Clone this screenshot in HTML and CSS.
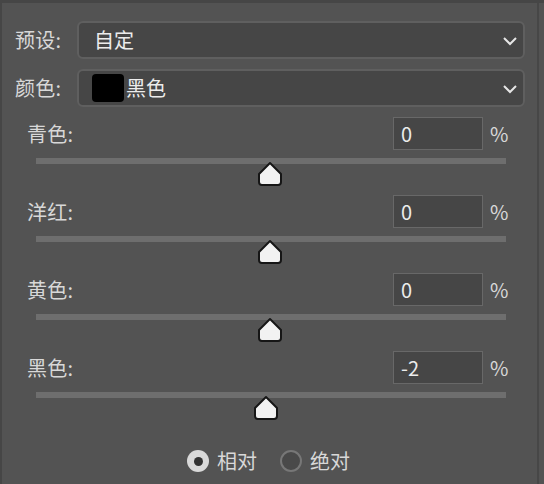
FILE: index.html
```html
<!DOCTYPE html>
<html lang="zh">
<head>
<meta charset="utf-8">
<link rel="stylesheet" href="styles.css">
</head>
<body>
<div class="frame">
  <div class="panel">
    <div class="field">
      <span class="flabel">预设:</span>
      <div class="select">
        <span class="stext">自定</span>
        <svg class="chev" width="16" height="10" viewBox="0 0 16 10"><path d="M2 2 L8 8 L14 2" fill="none" stroke="#e6e6e6" stroke-width="2"/></svg>
      </div>
    </div>
    <div class="field">
      <span class="flabel">颜色:</span>
      <div class="select">
        <span class="swatch"></span><span class="stext tight">黑色</span>
        <svg class="chev" width="16" height="10" viewBox="0 0 16 10"><path d="M2 2 L8 8 L14 2" fill="none" stroke="#e6e6e6" stroke-width="2"/></svg>
      </div>
    </div>

    <div class="sliders">
      <div class="slider">
        <div class="shead"><span class="slabel">青色:</span><span class="num">0</span><span class="pct">%</span></div>
        <div class="track"><svg class="thumb" style="left:221px" width="26" height="26" viewBox="0 0 26 26"><path d="M13 2 L24 13 L24 21 Q24 24 21 24 L5 24 Q2 24 2 21 L2 13 Z" fill="#f2f2f2" stroke="#161616" stroke-width="2" stroke-linejoin="round"/></svg></div>
      </div>
      <div class="slider">
        <div class="shead"><span class="slabel">洋红:</span><span class="num">0</span><span class="pct">%</span></div>
        <div class="track"><svg class="thumb" style="left:221px" width="26" height="26" viewBox="0 0 26 26"><path d="M13 2 L24 13 L24 21 Q24 24 21 24 L5 24 Q2 24 2 21 L2 13 Z" fill="#f2f2f2" stroke="#161616" stroke-width="2" stroke-linejoin="round"/></svg></div>
      </div>
      <div class="slider">
        <div class="shead"><span class="slabel">黄色:</span><span class="num">0</span><span class="pct">%</span></div>
        <div class="track"><svg class="thumb" style="left:221px" width="26" height="26" viewBox="0 0 26 26"><path d="M13 2 L24 13 L24 21 Q24 24 21 24 L5 24 Q2 24 2 21 L2 13 Z" fill="#f2f2f2" stroke="#161616" stroke-width="2" stroke-linejoin="round"/></svg></div>
      </div>
      <div class="slider">
        <div class="shead"><span class="slabel">黑色:</span><span class="num">-2</span><span class="pct">%</span></div>
        <div class="track"><svg class="thumb" style="left:217px" width="26" height="26" viewBox="0 0 26 26"><path d="M13 2 L24 13 L24 21 Q24 24 21 24 L5 24 Q2 24 2 21 L2 13 Z" fill="#f2f2f2" stroke="#161616" stroke-width="2" stroke-linejoin="round"/></svg></div>
      </div>
    </div>

    <div class="radios">
      <span class="radio on"></span><span class="rtext">相对</span>
      <span class="radio off"></span><span class="rtext">绝对</span>
    </div>
  </div>
  <div class="edge"></div>
</div>
</body>
</html>
```

FILE: styles.css
```css
html, body {
  margin: 0;
  padding: 0;
  background: #535353;
}
body {
  width: 544px;
  height: 484px;
  overflow: hidden;
  font-family: "Noto Sans CJK SC", "Noto Sans", sans-serif;
  color: #dedede;
}
.frame {
  display: flex;
  width: 544px;
  height: 484px;
  box-sizing: border-box;
  border-top: 3px solid #464646;
}
.panel {
  width: 537px;
  height: 481px;
  box-sizing: border-box;
  border-left: 2px solid #464646;
  padding: 18px 0 0 13px;
}
.edge {
  width: 2px;
  background: #474747;
}
.field {
  display: flex;
  align-items: center;
  height: 38px;
  margin-bottom: 10px;
}
.flabel {
  width: 62px;
  font-size: 20px;
  line-height: 24px;
  color: #d8d8d8;
  letter-spacing: 0.3px;
}
.select {
  display: flex;
  align-items: center;
  box-sizing: border-box;
  width: 448px;
  height: 38px;
  background: #464646;
  border: 2px solid #5f5f5f;
  border-radius: 6px;
  padding: 0 0 0 13px;
  position: relative;
}
.stext {
  font-size: 20px;
  line-height: 24px;
  color: #ececec;
  margin-left: 2px;
}
.stext.tight {
  margin-left: 2px;
}
.swatch {
  width: 32px;
  height: 28px;
  background: #000;
  border-radius: 4px;
}
.chev {
  position: absolute;
  right: 5px;
  top: 13px;
}
.slider {
  height: 78px;
  box-sizing: border-box;
  padding-left: 12px;
}
.shead {
  display: flex;
  align-items: center;
  height: 33px;
}
.slabel {
  width: 366px;
  font-size: 20px;
  line-height: 24px;
  color: #d8d8d8;
  letter-spacing: 0.3px;
}
.num {
  box-sizing: border-box;
  width: 90px;
  height: 33px;
  background: #464646;
  border: 1px solid #686868;
  font-size: 20px;
  line-height: 31px;
  padding-left: 7px;
  color: #ececec;
}
.pct {
  margin-left: 7px;
  font-size: 20px;
  line-height: 24px;
  color: #d8d8d8;
}
.track {
  position: relative;
  width: 470px;
  height: 6px;
  margin: 8px 0 0 9px;
  background: #6e6e6e;
}
.thumb {
  position: absolute;
  top: 3px;
}
.radios {
  display: flex;
  align-items: center;
  height: 24px;
  margin: 20px 0 0 172px;
}
.radio {
  box-sizing: border-box;
  width: 22px;
  height: 22px;
  border-radius: 50%;
}
.radio.on {
  background: #d9d9d9;
  display: flex;
  align-items: center;
  justify-content: center;
}
.radio.on::after {
  content: "";
  width: 9px;
  height: 9px;
  border-radius: 50%;
  background: #333;
}
.radio.off {
  border: 2px solid #777;
  background: #494949;
  margin-left: 23px;
}
.rtext {
  margin-left: 8px;
  font-size: 20px;
  line-height: 24px;
  color: #d8d8d8;
}
```
